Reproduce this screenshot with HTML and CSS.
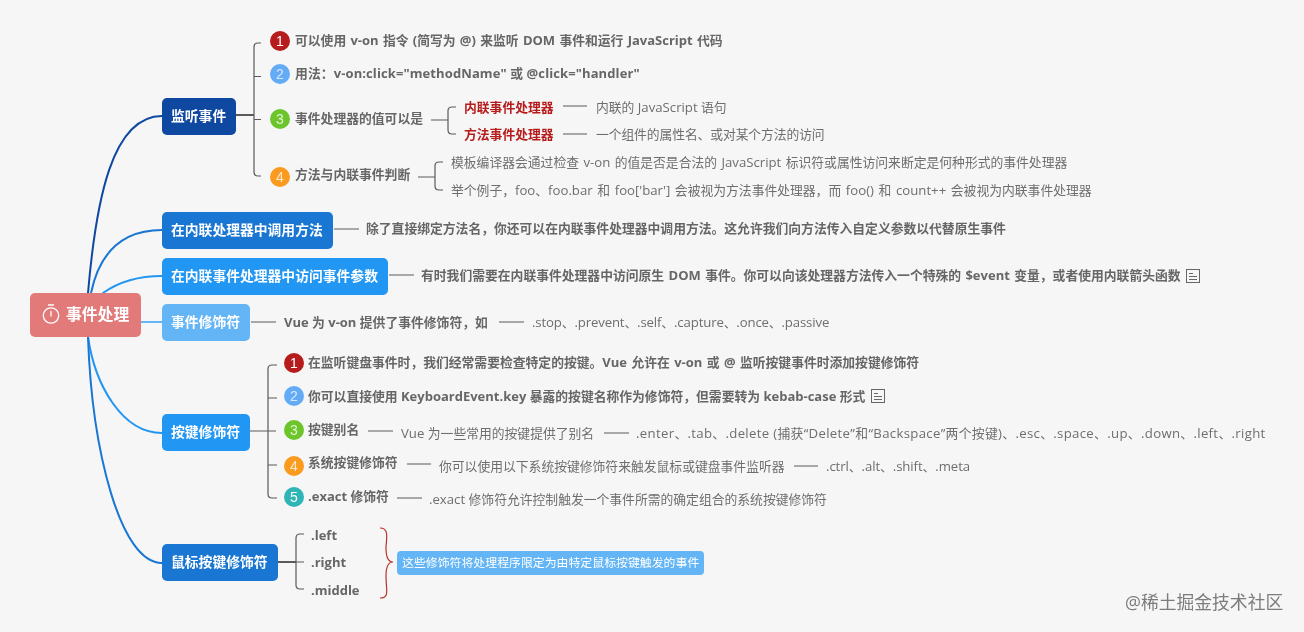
FILE: index.html
```html
<!DOCTYPE html>
<html lang="zh-CN">
<head>
<meta charset="utf-8">
<title>事件处理</title>
<link rel="stylesheet" href="styles.css">
</head>
<body>
<main class="map">
  <svg class="wires" width="1304" height="632" viewBox="0 0 1304 632" fill="none" aria-hidden="true">
    <g stroke-width="2" stroke-linecap="round">
      <path class="w-navy" d="M88 293C96 200 112 116 162 116"/>
      <path class="w-dark" d="M91 293C100 250 125 230 162 230"/>
      <path class="w-mid" d="M103 293C120 281 140 276 162 276"/>
      <path class="w-light" d="M141 322H162"/>
      <path class="w-mid" d="M88 337C95 385 122 433 162 433"/>
      <path class="w-dark" d="M88 337C92 450 120 563 162 563"/>
    </g>
    <g class="w-grey" stroke-width="1.2">
      <path stroke-width="2" d="M236 115H254"/>
      <path d="M261 43H258Q254 43 254 47V172Q254 176 258 176H261M254 76.5H261M254 119.5H261"/>
      <path d="M431 120H448M456 107H452Q448 107 448 111V130Q448 134 452 134H456"/>
      <path d="M418 177H435M443 162H439Q435 162 435 166V186Q435 190 439 190H443"/>
      <path d="M563 106H587M563 134H587"/>
      <path d="M334 229H359M389 275H414M251 322H276M499 322H524"/>
      <path d="M250 431H276M277 365H272Q268 365 268 369V494Q268 498 272 498H277M268 398H277M268 465H277"/>
      <path d="M368 431H393M604 433H629M407 464H431M794 466H818M397 498H422"/>
      <path stroke-width="2" d="M278 562H296"/>
      <path d="M296 562H304M304 534H300Q296 534 296 538V585Q296 589 300 589H304"/>
    </g>
    <path class="w-brace" stroke-width="1.2" d="M380 528C390 528 386 540 386 548C386 556 388 562 393 562C388 562 386 568 386 576C386 590 390 598 380 598"/>
  </svg>

  <div class="root"><svg class="watch" width="20" height="20" viewBox="0 0 20 20" fill="none" stroke="#fff" stroke-width="1.3" stroke-linecap="round"><circle cx="10" cy="11.5" r="7.7"/><path d="M7.5 1H12.5M10 7.5V12"/></svg>事件处理</div>

  <div class="topic topic-navy n-listen">监听事件</div>
  <div class="topic topic-dark n-call">在内联处理器中调用方法</div>
  <div class="topic topic-mid n-access">在内联事件处理器中访问事件参数</div>
  <div class="topic topic-light n-mods">事件修饰符</div>
  <div class="topic topic-mid n-keys">按键修饰符</div>
  <div class="topic topic-dark n-mouse">鼠标按键修饰符</div>

  <span class="badge red b-a1">1</span>
  <span class="badge blue b-a2">2</span>
  <span class="badge green b-a3">3</span>
  <span class="badge orange b-a4">4</span>
  <span class="badge red b-k1">1</span>
  <span class="badge blue b-k2">2</span>
  <span class="badge green b-k3">3</span>
  <span class="badge orange b-k4">4</span>
  <span class="badge teal b-k5">5</span>

  <span class="t bold a1">可以使用<span class="l"> v-on </span>指令<span class="l"> (</span>简写为<span class="l"> @) </span>来监听<span class="l"> DOM </span>事件和运行<span class="l"> JavaScript </span>代码</span>
  <span class="t bold a2">用法：<span class="l">v-on:click="methodName" </span>或<span class="l"> @click="handler"</span></span>
  <span class="t bold a3">事件处理器的值可以是</span>
  <span class="t bold crimson a3a">内联事件处理器</span>
  <span class="t a3a2">内联的<span class="l"> JavaScript </span>语句</span>
  <span class="t bold crimson a3b">方法事件处理器</span>
  <span class="t a3b2">一个组件的属性名、或对某个方法的访问</span>
  <span class="t bold a4">方法与内联事件判断</span>
  <span class="t a4a">模板编译器会通过检查<span class="l"> v-on </span>的值是否是合法的<span class="l"> JavaScript </span>标识符或属性访问来断定是何种形式的事件处理器</span>
  <span class="t a4b">举个例子，<span class="l">foo</span>、<span class="l">foo.bar </span>和<span class="l"> foo['bar'] </span>会被视为方法事件处理器，而<span class="l"> foo() </span>和<span class="l"> count++ </span>会被视为内联事件处理器</span>

  <span class="t bold c1">除了直接绑定方法名，你还可以在内联事件处理器中调用方法。这允许我们向方法传入自定义参数以代替原生事件</span>
  <span class="t bold d1">有时我们需要在内联事件处理器中访问原生<span class="l"> DOM </span>事件。你可以向该处理器方法传入一个特殊的<span class="l"> $event </span>变量，或者使用内联箭头函数</span>
  <svg class="note note-d" width="14" height="14" viewBox="0 0 14 14" fill="none" stroke="#666" stroke-width="1"><rect x=".5" y=".5" width="13" height="13"/><path d="M3 4.5H7M3 7.5H11M3 10.5H11"/></svg>
  <span class="t bold e1"><span class="l">Vue </span>为<span class="l"> v-on </span>提供了事件修饰符，如</span>
  <span class="t e2"><span class="l">.stop</span>、<span class="l">.prevent</span>、<span class="l">.self</span>、<span class="l">.capture</span>、<span class="l">.once</span>、<span class="l">.passive</span></span>

  <span class="t bold k1">在监听键盘事件时，我们经常需要检查特定的按键。<span class="l">Vue </span>允许在<span class="l"> v-on </span>或<span class="l"> @ </span>监听按键事件时添加按键修饰符</span>
  <span class="t bold k2">你可以直接使用<span class="l"> KeyboardEvent.key </span>暴露的按键名称作为修饰符，但需要转为<span class="l"> kebab-case </span>形式</span>
  <svg class="note note-k" width="14" height="14" viewBox="0 0 14 14" fill="none" stroke="#666" stroke-width="1"><rect x=".5" y=".5" width="13" height="13"/><path d="M3 4.5H7M3 7.5H11M3 10.5H11"/></svg>
  <span class="t bold k3">按键别名</span>
  <span class="t k3a"><span class="l">Vue </span>为一些常用的按键提供了别名</span>
  <span class="t k3b"><span class="l">.enter</span>、<span class="l">.tab</span>、<span class="l">.delete (</span>捕获<span class="l">“Delete”</span>和<span class="l">“Backspace”</span>两个按键<span class="l">)</span>、<span class="l">.esc</span>、<span class="l">.space</span>、<span class="l">.up</span>、<span class="l">.down</span>、<span class="l">.left</span>、<span class="l">.right</span></span>
  <span class="t bold k4">系统按键修饰符</span>
  <span class="t k4a">你可以使用以下系统按键修饰符来触发鼠标或键盘事件监听器</span>
  <span class="t k4b"><span class="l">.ctrl</span>、<span class="l">.alt</span>、<span class="l">.shift</span>、<span class="l">.meta</span></span>
  <span class="t bold k5"><span class="l">.exact </span>修饰符</span>
  <span class="t k5a"><span class="l">.exact </span>修饰符允许控制触发一个事件所需的确定组合的系统按键修饰符</span>

  <span class="t bold m1"><span class="l">.left</span></span>
  <span class="t bold m2"><span class="l">.right</span></span>
  <span class="t bold m3"><span class="l">.middle</span></span>
  <div class="summary">这些修饰符将处理程序限定为由特定鼠标按键触发的事件</div>

  <div class="mark">@稀土掘金技术社区</div>
</main>
</body>
</html>
```
FILE: styles.css
```css
* { box-sizing: border-box; }
html, body { margin: 0; padding: 0; }
body { background: #f6f6f6; overflow: hidden; }

.map {
  position: relative;
  width: 1304px;
  height: 632px;
  background: #f6f6f6;
  font-family: "Open Sans", "Noto Sans CJK SC", sans-serif;
  color: #6e6e6e;
  filter: blur(0.3px);
}
.wires { position: absolute; left: 0; top: 0; }
.w-navy { stroke: #0f48a0; }
.w-dark { stroke: #1976d2; }
.w-mid { stroke: #2196f3; }
.w-light { stroke: #64b5f6; }
.w-grey { stroke: #5a5a5a; }
.w-brace { stroke: #b5342c; }

.root {
  position: absolute;
  left: 30px; top: 293px;
  width: 111px; height: 44px;
  display: flex;
  align-items: center;
  gap: 5px;
  padding: 0 0 3px 11px;
  border-radius: 5px;
  background: #e27a7a;
  color: #fff;
  font-size: 15.8px;
  font-weight: 700;
}
.watch { flex: none; }

.topic {
  position: absolute;
  left: 162px;
  height: 37px;
  display: flex;
  align-items: center;
  padding: 0 0 3px 9px;
  border-radius: 5px;
  color: #fff;
  font-size: 13.8px;
  font-weight: 700;
  white-space: nowrap;
}
.topic-navy { background: #0f48a0; }
.topic-dark { background: #1976d2; }
.topic-mid { background: #2196f3; }
.topic-light { background: #64b5f6; }
.n-listen { top: 98px; width: 74px; }
.n-call { top: 212px; width: 171px; }
.n-access { top: 258px; width: 226px; }
.n-mods { top: 304px; width: 88px; }
.n-keys { top: 414px; width: 88px; }
.n-mouse { top: 544px; width: 116px; }

.badge {
  position: absolute;
  width: 20px; height: 20px;
  display: flex;
  align-items: center;
  justify-content: center;
  border-radius: 50%;
  color: #fff;
  font-family: "Liberation Sans", sans-serif;
  font-size: 14px;
}
.red { background: #b71c1c; }
.blue { background: #64abf5; color: #d5e8fc; }
.green { background: #6cc52b; color: #e3f5d4; }
.orange { background: #fa9a1e; color: #fdeacb; }
.teal { background: #2fb5b5; }
.b-a1 { left: 270px; top: 31px; }
.b-a2 { left: 270px; top: 64px; }
.b-a3 { left: 270px; top: 109px; }
.b-a4 { left: 270px; top: 167px; }
.b-k1 { left: 284px; top: 353px; }
.b-k2 { left: 284px; top: 386px; }
.b-k3 { left: 284px; top: 420px; }
.b-k4 { left: 284px; top: 456px; }
.b-k5 { left: 284px; top: 487px; }

.t {
  position: absolute;
  height: 20px;
  line-height: 20px;
  font-size: 12.8px;
  white-space: nowrap;
}
.t .l { font-size: 13.2px; }
.bold { font-weight: 700; color: #666; }
.bold .l { font-size: 13px; }
.crimson { color: #b71c1c; }
.a1 { left: 295px; top: 30px; word-spacing: 0.9px; }
.a2 { left: 295px; top: 63px; letter-spacing: 0.1px; }
.a3 { left: 295px; top: 108px; }
.a3a { left: 464px; top: 97px; }
.a3a2 { left: 596px; top: 97px; }
.a3b { left: 464px; top: 124px; }
.a3b2 { left: 596px; top: 124px; letter-spacing: -0.1px; }
.a4 { left: 295px; top: 164px; }
.a4a { left: 451px; top: 152px; word-spacing: 1px; }
.a4b { left: 451px; top: 180px; word-spacing: 1.2px; }
.c1 { left: 366px; top: 218px; }
.d1 { left: 421px; top: 265px; word-spacing: 1px; }
.e1 { left: 284px; top: 312px; }
.e2 { left: 532px; top: 312px; letter-spacing: -0.14px; }
.k1 { left: 308px; top: 352px; word-spacing: 1px; }
.k2 { left: 308px; top: 386px; }
.k3 { left: 308px; top: 419px; }
.k3a { left: 401px; top: 423px; }
.k3b { left: 636px; top: 423px; letter-spacing: 0.32px; }
.k4 { left: 308px; top: 452px; }
.k4a { left: 439px; top: 456px; }
.k4b { left: 826px; top: 456px; letter-spacing: -0.08px; }
.k5 { left: 308px; top: 486px; }
.k5a { left: 429px; top: 489px; }
.m1 { left: 311px; top: 525px; }
.m2 { left: 311px; top: 552px; }
.m3 { left: 311px; top: 580px; }

.note { position: absolute; }
.note-d { left: 1186px; top: 269px; }
.note-k { left: 871px; top: 389px; }

.summary {
  position: absolute;
  left: 397px; top: 551px;
  width: 307px; height: 24px;
  display: flex;
  align-items: center;
  padding: 0 5px 3px;
  border-radius: 4px;
  background: #64b5f6;
  color: #fff;
  font-size: 11.9px;
  white-space: nowrap;
}

.mark {
  position: absolute;
  left: 1125px; top: 590px;
  color: #7c7c7c;
  font-size: 17.8px;
  line-height: 25px;
  white-space: nowrap;
}
```
